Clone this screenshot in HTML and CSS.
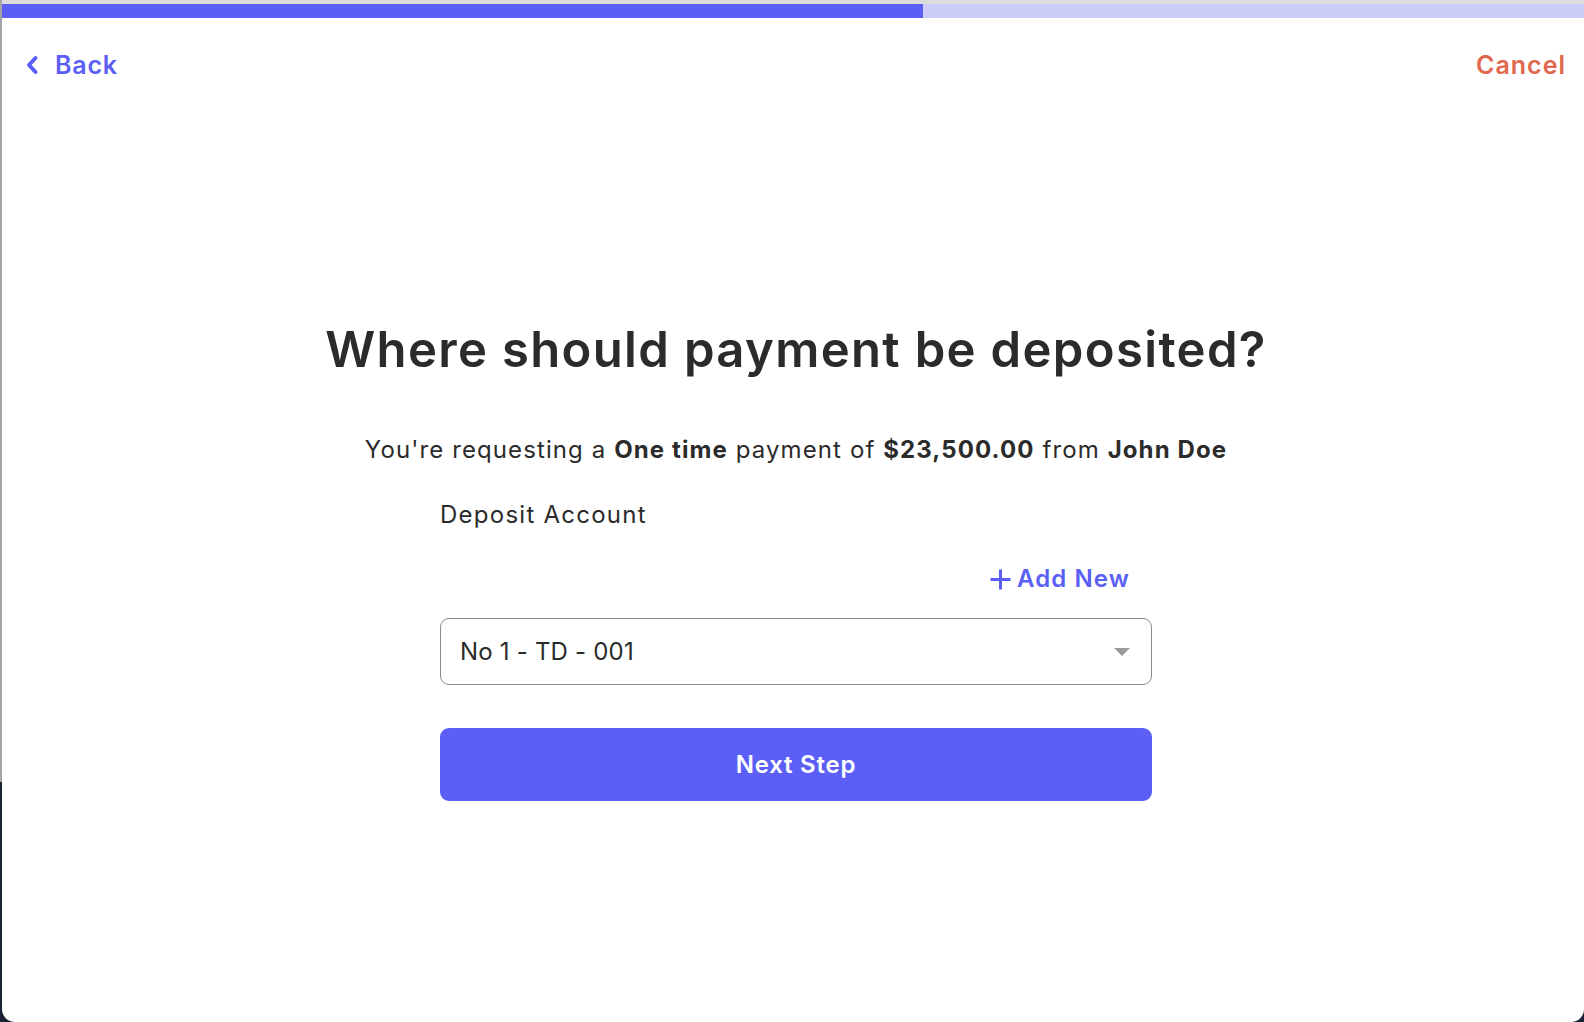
FILE: index.html
```html
<!DOCTYPE html>
<html lang="en">
<head>
<meta charset="utf-8">
<title>Deposit Account</title>
<link rel="stylesheet" href="styles.css">
</head>
<body>
<div class="modal">
  <div class="progress"><div class="progress-fill" style="width:58.2%"></div></div>
  <header class="topbar">
    <a class="back" href="#">
      <svg class="chev" width="14" height="20" viewBox="0 0 14 20"><polyline points="10.5,3 4,10 10.5,17" fill="none" stroke="#5b5ff5" stroke-width="4" stroke-linecap="round" stroke-linejoin="round"/></svg>
      <span>Back</span>
    </a>
    <a class="cancel" href="#">Cancel</a>
  </header>
  <main class="content">
    <h1 class="title">Where should payment be deposited?</h1>
    <p class="summary">You're requesting a <b>One time</b> payment of <b>$23,500.00</b> from <b>John Doe</b></p>
    <div class="form">
      <div class="label">Deposit Account</div>
      <div class="add-row">
        <a class="add-new" href="#">
          <svg width="23" height="23" viewBox="0 0 23 23"><path d="M11.5 1.5V21.5M1.5 11.5H21.5" stroke="#5b5ff5" stroke-width="3" fill="none"/></svg>
          <span>Add New</span>
        </a>
      </div>
      <div class="select">
        <span>No 1 - TD - 001</span>
        <svg class="caret" width="18" height="10" viewBox="0 0 18 10"><path d="M1 1H17L9 9Z" fill="#9a9a9a"/></svg>
      </div>
      <button class="next">Next Step</button>
    </div>
  </main>
</div>
</body>
</html>
```
FILE: styles.css
```css
* { box-sizing: border-box; }
html, body { margin: 0; padding: 0; }
body {
  width: 1584px;
  height: 1022px;
  overflow: hidden;
  background: linear-gradient(to bottom, #a4a4a6 0, #a4a4a6 782px, #1a2134 782px);
  font-family: Inter, "Noto Sans", sans-serif;
  color: #2b2b2b;
}
.modal {
  margin-left: 2px;
  height: 1022px;
  background: #fff;
  border-radius: 0 0 13px 13px;
  border-top: 4px solid #dcdcdc;
  display: flex;
  flex-direction: column;
}
.progress {
  height: 14px;
  background: #cbccf8;
}
.progress-fill {
  height: 100%;
  background: #5b5ff5;
}
.topbar {
  display: flex;
  justify-content: space-between;
  align-items: center;
  height: 94px;
  padding: 0 18px 0 23px;
}
a { text-decoration: none; }
.back {
  display: flex;
  align-items: center;
  gap: 16px;
  color: #5b5ff5;
  font-size: 25px;
  font-weight: 600;
  letter-spacing: 0.8px;
}
.chev { display: block; }
.cancel {
  color: #e2674f;
  font-size: 25px;
  font-weight: 600;
  letter-spacing: 1px;
}
.content {
  display: flex;
  flex-direction: column;
  align-items: center;
  padding-top: 209px;
  padding-left: 6px;
}
.title {
  margin: 0;
  font-size: 49px;
  line-height: 58px;
  font-weight: 600;
  color: #2b2b2b;
  letter-spacing: 1.35px;
}
.summary {
  margin: 53px 0 0;
  font-size: 24px;
  line-height: 36px;
  color: #2b2b2b;
  letter-spacing: 1.1px;
}
.summary b { font-weight: 700; }
.form {
  width: 712px;
  display: flex;
  flex-direction: column;
}
.label {
  margin-top: 29px;
  font-size: 24px;
  line-height: 36px;
  letter-spacing: 1.25px;
}
.add-row {
  margin-top: 28px;
  display: flex;
  justify-content: flex-end;
  padding-right: 22px;
}
.add-new {
  display: flex;
  align-items: center;
  gap: 5px;
  color: #5b5ff5;
  font-size: 24px;
  line-height: 36px;
  font-weight: 600;
  letter-spacing: 1.1px;
}
.add-new svg { display: block; }
.select {
  margin-top: 21px;
  height: 67px;
  border: 1.5px solid #8b8b93;
  border-radius: 9px;
  display: flex;
  align-items: center;
  justify-content: space-between;
  padding: 0 20px 0 19px;
  font-size: 24px;
  letter-spacing: 0.2px;
}
.caret { display: block; }
.next {
  margin-top: 43px;
  height: 73px;
  border: none;
  border-radius: 9px;
  background: #5b5ff5;
  color: #fff;
  font-family: inherit;
  font-size: 24px;
  font-weight: 600;
  letter-spacing: 0.8px;
}
```
